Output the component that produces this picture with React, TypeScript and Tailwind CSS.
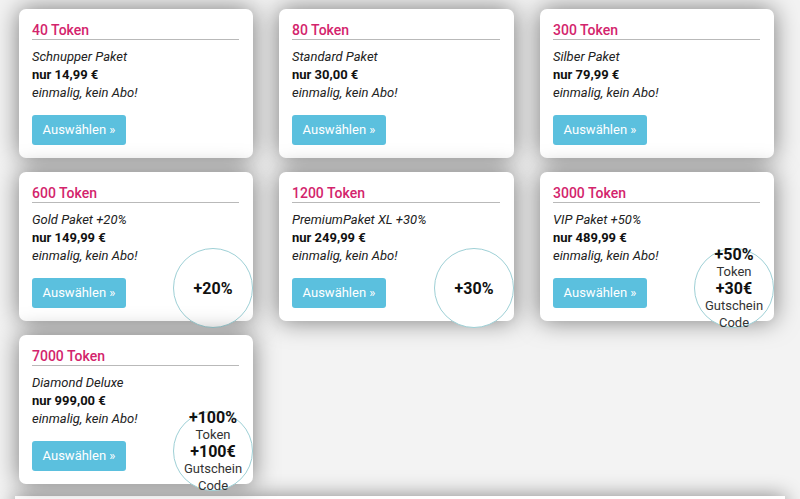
type Pack = {
  tokens: string
  name: string
  price: string
  badge?: { top: string; sub?: string; extra?: string; extraSub?: string }
}

const packs: Pack[] = [
  { tokens: "40 Token", name: "Schnupper Paket", price: "nur 14,99 €" },
  { tokens: "80 Token", name: "Standard Paket", price: "nur 30,00 €" },
  { tokens: "300 Token", name: "Silber Paket", price: "nur 79,99 €" },
  { tokens: "600 Token", name: "Gold Paket +20%", price: "nur 149,99 €", badge: { top: "+20%" } },
  { tokens: "1200 Token", name: "PremiumPaket XL +30%", price: "nur 249,99 €", badge: { top: "+30%" } },
  {
    tokens: "3000 Token",
    name: "VIP Paket +50%",
    price: "nur 489,99 €",
    badge: { top: "+50%", sub: "Token", extra: "+30€", extraSub: "Gutschein Code" },
  },
  {
    tokens: "7000 Token",
    name: "Diamond Deluxe",
    price: "nur 999,00 €",
    badge: { top: "+100%", sub: "Token", extra: "+100€", extraSub: "Gutschein Code" },
  },
]

const Badge = ({ badge }: { badge: NonNullable<Pack["badge"]> }) => (
  <div className="absolute right-0 -bottom-[7px] w-[80px] h-[80px] rounded-full border border-[#9ed0d6] bg-white flex items-center justify-center">
    <div className="text-center text-[#111] leading-[17px] w-[90px]">
      <div className="text-[16px] font-bold">{badge.top}</div>
      {badge.sub && <div className="text-[13px] text-[#333]">{badge.sub}</div>}
      {badge.extra && <div className="text-[16px] font-bold">{badge.extra}</div>}
      {badge.extraSub && <div className="text-[13px] text-[#333] w-[64px] mx-auto">{badge.extraSub}</div>}
    </div>
  </div>
)

const PackCard = ({ pack }: { pack: Pack }) => (
  <div className="relative h-[149px] bg-white rounded-[7px] shadow-[0_0_24px_rgba(0,0,0,0.5)] pt-[11px] pl-[13px] pr-[14px]">
    <div className="h-[20px] leading-[20px] text-[14px] font-medium text-[#d3246c] border-b border-[#b9b9b9]">
      {pack.tokens}
    </div>
    <div className="mt-[8px] text-[13px] leading-[18px] text-[#222]">
      <div className="italic">{pack.name}</div>
      <div className="font-bold text-[#111]">{pack.price}</div>
      <div className="italic">einmalig, kein Abo!</div>
    </div>
    <button className="mt-[13px] h-[30px] w-[94px] rounded-[3px] bg-[#5bc0de] text-white text-[13px]">
      Auswählen »
    </button>
    {pack.badge && <Badge badge={pack.badge} />}
  </div>
)

export default function App() {
  return (
    <div className="w-[800px] h-[499px] overflow-hidden bg-[#f3f3f3] font-['Roboto',sans-serif]">
      <div className="pl-[19px] pt-[9px] grid grid-cols-[234px_235px_234px] gap-x-[26px] gap-y-[14px]">
        {packs.map((p) => (
          <PackCard key={p.tokens} pack={p} />
        ))}
      </div>
      <div className="mx-[15px] mt-[12px] h-[40px] bg-white shadow-[0_0_20px_rgba(0,0,0,0.45)]" />
    </div>
  )
}
